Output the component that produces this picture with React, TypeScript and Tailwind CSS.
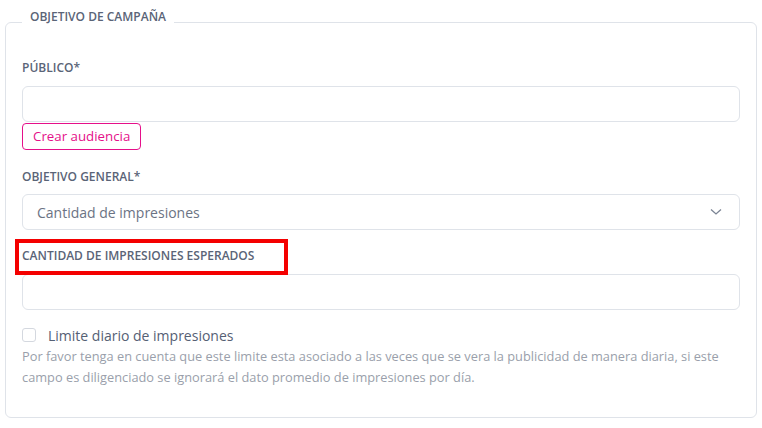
import { useState } from 'react';

const labelCls = 'block text-[12px] leading-4 font-semibold text-[#5a6477]';
const inputCls = 'block w-full h-[36px] rounded-[6px] border border-[#dfe3e9] bg-white px-[14px] text-[14px] text-[#6b7384] outline-none';

export default function App() {
  const [publico, setPublico] = useState('');
  const [cantidad, setCantidad] = useState('');
  const [limite, setLimite] = useState(false);

  return (
    <div className="min-h-[428px] bg-white pt-[9px] font-['Open_Sans',sans-serif]">
      <fieldset className="mx-[5px] rounded-[6px] border border-[#dfe3e9] px-4 pb-[29px]">
        <legend className="px-[8px] pb-[10px] text-[12px] leading-4 font-semibold text-[#5a6477]">
          OBJETIVO DE CAMPAÑA
        </legend>

        <label className={`${labelCls} mt-[25px]`}>PÚBLICO*</label>
        <input className={`${inputCls} mt-[10px]`} value={publico} onChange={(e) => setPublico(e.target.value)} />
        <button className="mt-px h-[27px] rounded-[4px] border border-[#e5108a] px-[10px] text-[13.3px] text-[#e5108a]">
          Crear audiencia
        </button>

        <label className={`${labelCls} mt-[19px]`}>OBJETIVO GENERAL*</label>
        <div className="mt-[9px] flex h-[36px] items-center justify-between rounded-[6px] border border-[#dfe3e9] px-[14px]">
          <span className="text-[14px] text-[#6b7384]">Cantidad de impresiones</span>
          <svg width="12" height="8" viewBox="0 0 12 8" className="mr-[3px]">
            <polyline points="1,1.5 6,6 11,1.5" fill="none" stroke="#7b8494" strokeWidth="1.3" />
          </svg>
        </div>

        <div className="relative mt-[18px]">
          <label className={labelCls}>CANTIDAD DE IMPRESIONES ESPERADOS</label>
          <div className="pointer-events-none absolute -left-[7px] -top-[9px] h-[36px] w-[273px] border-4 border-[#f40000]" />
        </div>
        <input className={`${inputCls} mt-[10px]`} value={cantidad} onChange={(e) => setCantidad(e.target.value)} />

        <label className="mt-[15px] flex h-5 cursor-pointer items-center gap-3">
          <input
            type="checkbox"
            checked={limite}
            onChange={(e) => setLimite(e.target.checked)}
            className="h-[14px] w-[14px] appearance-none rounded-[3px] border border-[#d4d8df] bg-white checked:bg-[#e5108a]"
          />
          <span className="text-[14px] text-[#556074]">Limite diario de impresiones</span>
        </label>
        <p className="mt-px text-[12.8px] leading-[21px] text-[#9a9fab]">
          <span className="block whitespace-nowrap">
            Por favor tenga en cuenta que este limite esta asociado a las veces que se vera la publicidad de manera diaria, si este
          </span>
          <span className="block whitespace-nowrap">
            campo es diligenciado se ignorará el dato promedio de impresiones por día.
          </span>
        </p>
      </fieldset>
    </div>
  );
}
